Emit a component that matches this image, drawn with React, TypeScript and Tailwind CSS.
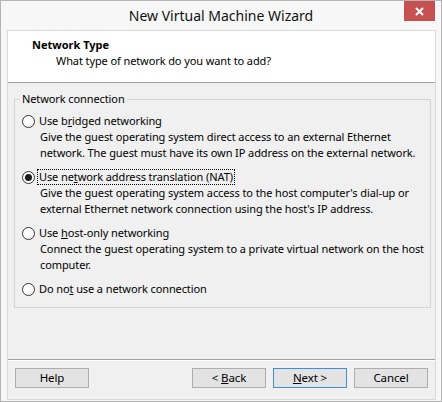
import type { ReactNode } from "react";

type Option = {
  label: ReactNode;
  desc?: string[];
  checked?: boolean;
};

const options: Option[] = [
  {
    label: (
      <>
        Use b<span className="underline">r</span>idged networking
      </>
    ),
    desc: [
      "Give the guest operating system direct access to an external Ethernet",
      "network. The guest must have its own IP address on the external network.",
    ],
  },
  {
    label: (
      <>
        Use ne<span className="underline">t</span>work address translation (NAT)
      </>
    ),
    desc: [
      "Give the guest operating system access to the host computer's dial-up or",
      "external Ethernet network connection using the host's IP address.",
    ],
    checked: true,
  },
  {
    label: (
      <>
        Use <span className="underline">h</span>ost-only networking
      </>
    ),
    desc: [
      "Connect the guest operating system to a private virtual network on the host",
      "computer.",
    ],
  },
  {
    label: (
      <>
        Do no<span className="underline">t</span> use a network connection
      </>
    ),
  },
];

const Radio = ({ checked }: { checked?: boolean }) => (
  <span className="w-[13px] h-[13px] rounded-full border border-[#333333] bg-white flex items-center justify-center shrink-0">
    {checked && <span className="w-[7px] h-[7px] rounded-full bg-[#1c1c1c]" />}
  </span>
);

const Button = ({ children, active }: { children: ReactNode; active?: boolean }) => (
  <button
    className={
      active
        ? "w-[74px] h-[20px] border border-[#3c8fe0] bg-[#e3e3e3] text-[11.5px] leading-none text-black"
        : "w-[74px] h-[20px] border border-[#adadad] bg-[#e3e3e3] text-[11.5px] leading-none text-black"
    }
  >
    {children}
  </button>
);

const App = () => {
  return (
    <div className="w-[442px] h-[402px] border border-[#b4b4b4] bg-[#f7f7f7] flex flex-col relative font-['Noto_Sans',sans-serif] text-black">
      {/* title bar */}
      <div className="h-[29px] flex items-center justify-center text-[14px] text-[#111]">
        New Virtual Machine Wizard
      </div>
      <div className="absolute right-[6px] top-0 w-[31px] h-[20px] bg-[#c75050] flex items-center justify-center">
        <svg width="9" height="9" viewBox="0 0 9 9">
          <path d="M1 1 L8 8 M8 1 L1 8" stroke="white" strokeWidth="2" />
        </svg>
      </div>

      {/* client area */}
      <div className="ml-[6px] mr-[5px] mb-[1px] flex-1 border border-[#d9d9d9] flex flex-col text-[11px] tracking-[-0.1px] whitespace-nowrap">
        <div className="h-[52px] bg-white border-b border-[#a0a0a0] pt-[6px] pl-[24px] leading-[16px]">
          <div className="font-bold tracking-normal">Network Type</div>
          <div className="pl-[24px]">What type of network do you want to add?</div>
        </div>

        <div className="h-[277px] bg-[#f0f0f0] border-b border-[#a0a0a0] pt-[8px]">
          <fieldset className="ml-[6px] mr-[7px] border border-[#d5d5d5] pl-[5px] pr-[6px] pb-[10px]">
            <legend className="px-[2px] leading-[16px]">Network connection</legend>
            <div className="ml-[2px] mt-[6px] flex flex-col gap-[8px]">
              {options.map((opt, i) => (
                <div key={i} className="flex flex-col">
                  <div className="h-[16px] flex items-center gap-[3px]">
                    <Radio checked={opt.checked} />
                    <span
                      className={
                        opt.checked
                          ? "leading-[14px] px-[1px] outline outline-1 outline-dotted outline-black"
                          : "leading-[14px] px-[1px]"
                      }
                    >
                      {opt.label}
                    </span>
                  </div>
                  {opt.desc && (
                    <div className="pl-[18px] leading-[16px]">
                      {opt.desc.map((line) => (
                        <div key={line}>{line}</div>
                      ))}
                    </div>
                  )}
                </div>
              ))}
            </div>
          </fieldset>
        </div>

        {/* footer buttons */}
        <div className="flex-1 bg-[#f0f0f0] border-t border-white flex items-start pt-[7px] px-[7px]">
          <Button>Help</Button>
          <div className="ml-auto flex gap-[7px]">
            <Button>
              &lt; <span className="underline">B</span>ack
            </Button>
            <Button active>
              <span className="underline">N</span>ext &gt;
            </Button>
            <Button>Cancel</Button>
          </div>
        </div>
      </div>
    </div>
  );
};

export default App;
